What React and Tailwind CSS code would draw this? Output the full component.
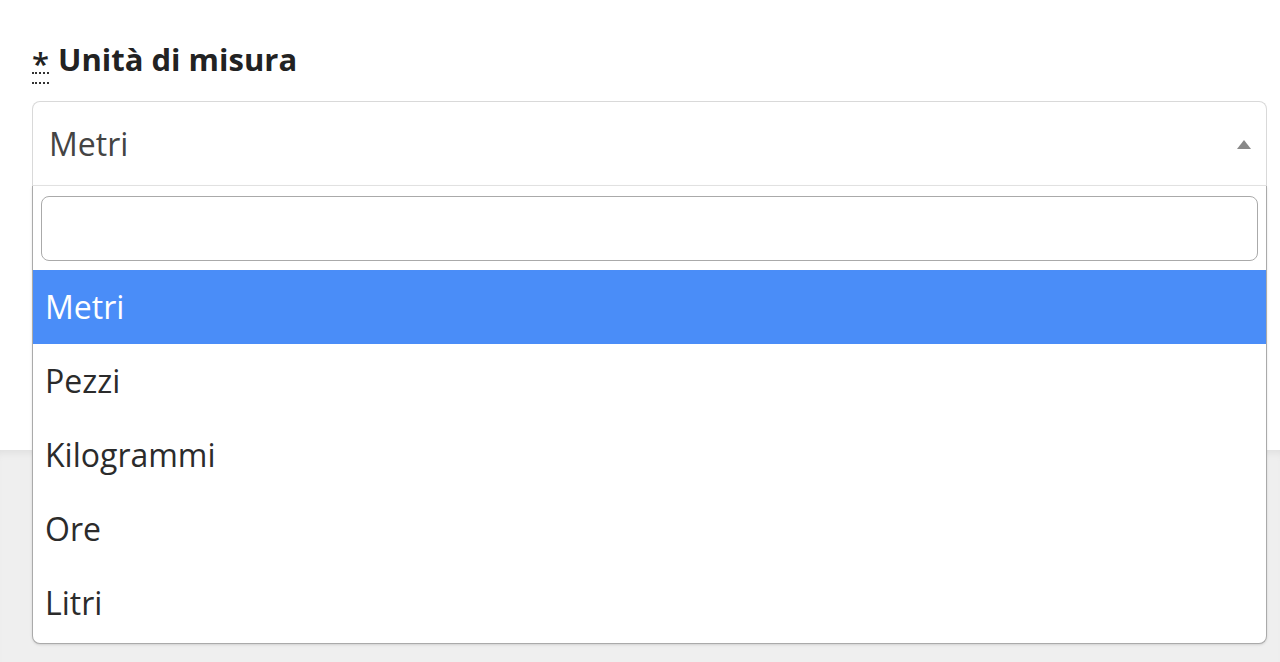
import React, { useState } from 'react';

const options = ['Metri', 'Pezzi', 'Kilogrammi', 'Ore', 'Litri'];

const App = () => {
  const [selected] = useState('Metri');
  const [query, setQuery] = useState('');

  return (
    <div className="min-h-[662px] flex flex-col bg-white" style={{ fontFamily: '"Open Sans", "Noto Sans", sans-serif' }}>
      <div className="h-[450px] pl-8 pr-[13px] pt-[38px] bg-white">
        <label className="flex items-start gap-[9px] text-[31px] font-bold text-[#222] leading-[42px]">
          <abbr
            title="obbligatorio"
            className="no-underline relative pt-[4px] font-semibold"
          >
            *
            <span className="absolute left-0 right-0 top-[34px] border-b-2 border-dotted border-[#333]"></span>
            <span className="absolute left-0 right-0 top-[44px] border-b-2 border-dotted border-[#333]"></span>
          </abbr>
          <span>Unità di misura</span>
        </label>

        <div className="relative mt-[17px] z-10">
          <div className="h-[85px] flex items-center justify-between pl-[16px] pr-[15px] border border-[#d9d9d9] border-b-[#e4e4e4] rounded-t-[8px] bg-white">
            <span className="text-[32px] text-[#444]">{selected}</span>
            <svg width="14" height="9" viewBox="0 0 14 9" className="mt-[2px]">
              <path d="M0 9 L7 0 L14 9 Z" fill="#888" />
            </svg>
          </div>

          <div className="absolute left-0 right-0 top-[85px] bg-white border border-[#aaa] border-t-0 rounded-b-[8px] shadow-sm">
            <div className="px-2 pt-[10px] pb-[9px]">
              <input
                value={query}
                onChange={(e) => setQuery(e.target.value)}
                className="w-full h-[65px] border border-[#aaa] rounded-[8px] px-3 text-[32px] outline-none"
              />
            </div>
            <ul className="pb-[3px]">
              {options
                .filter((o) => o.toLowerCase().includes(query.toLowerCase()))
                .map((o) => (
                  <li
                    key={o}
                    className={
                      o === selected
                        ? 'h-[74px] flex items-center px-[12px] text-[32px] bg-[#4a8df8] text-white'
                        : 'h-[74px] flex items-center px-[12px] text-[32px] text-[#2b2b2b]'
                    }
                  >
                    {o}
                  </li>
                ))}
            </ul>
          </div>
        </div>
      </div>

      <div className="flex-1 bg-[#efefef] shadow-[inset_0_8px_10px_-6px_rgba(0,0,0,0.08)]"></div>
    </div>
  );
};

export default App;
